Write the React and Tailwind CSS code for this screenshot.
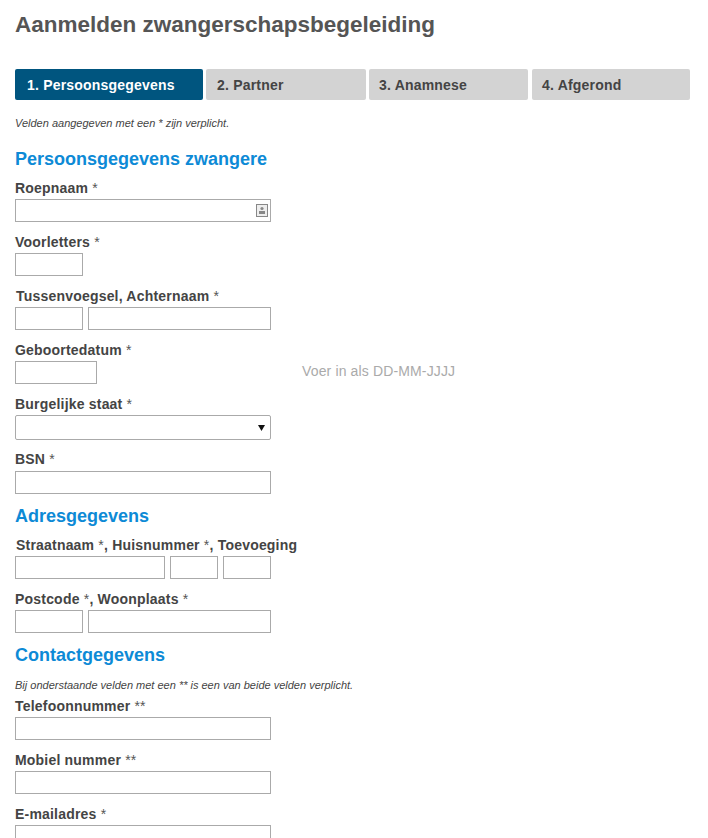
import { Fragment } from "react";

const tabs = [
  { label: "1. Persoonsgegevens", width: "w-[188px]", pad: "pl-[12px]", active: true },
  { label: "2. Partner", width: "w-[160px]", pad: "pl-[11px]" },
  { label: "3. Anamnese", width: "w-[159px]", pad: "pl-[10px]" },
  { label: "4. Afgerond", width: "ml-px w-[158px]", pad: "pl-[10px]" },
];

function Label({ children, className = "" }) {
  return (
    <label className={`block h-5 text-sm font-bold leading-[19px] tracking-[0.2px] text-[#444] ${className}`}>
      {children}
    </label>
  );
}

function Star({ mark = "*" }) {
  return <span className="font-normal text-[#555]">{mark}</span>;
}

function TextInput({ width = "w-[256px]" }) {
  return <input type="text" className={`block h-[23px] border border-[#aaa] bg-white ${width}`} />;
}

function Heading({ children, className = "" }) {
  return (
    <h2 className={`text-lg font-bold leading-6 text-[#0d8ad6] ${className}`}>{children}</h2>
  );
}

export default function App() {
  return (
    <div className="h-screen overflow-hidden bg-white px-[15px] font-['Liberation_Sans',Arial,sans-serif]">
      <h1 className="pt-[11px] text-[22.5px] font-bold leading-7 text-[#555]">
        Aanmelden zwangerschapsbegeleiding
      </h1>

      {/* STAPPEN */}
      <div className="mt-[30px] flex gap-[3px]">
        {tabs.map((tab) => (
          <div
            key={tab.label}
            className={`h-[31px] rounded-[2px] text-sm font-bold leading-[32px] tracking-[0.2px] ${tab.pad} ${tab.width} ${
              tab.active ? "bg-[#00557f] text-white" : "bg-[#d3d3d3] text-[#444]"
            }`}
          >
            {tab.label}
          </div>
        ))}
      </div>

      <p className="mt-[17px] h-3 text-[11px] italic leading-3 text-[#444]">
        Velden aangegeven met een * zijn verplicht.
      </p>

      <Heading className="mt-[18px]">Persoonsgegevens zwangere</Heading>

      {/* PERSOONSGEGEVENS */}
      <div className="mt-[8px]">
        <Label>
          Roepnaam <Star />
        </Label>
        <div className="relative w-[256px]">
          <TextInput />
          <svg
            className="absolute right-[3px] top-[5px]"
            width="12"
            height="13"
            viewBox="0 0 12 13"
          >
            <rect x="0.5" y="0.5" width="11" height="12" fill="#eee" stroke="#888" />
            <circle cx="6" cy="4.5" r="1.6" fill="#888" />
            <rect x="3" y="7" width="6" height="3" fill="#888" />
          </svg>
        </div>

        <Label className="mt-[11px]">
          Voorletters <Star />
        </Label>
        <TextInput width="w-[68px]" />

        <Label className="mt-[11px] pl-px">
          Tussenvoegsel, Achternaam <Star />
        </Label>
        <div className="flex gap-[5px]">
          <TextInput width="w-[68px]" />
          <TextInput width="w-[183px]" />
        </div>

        <Label className="mt-[11px]">
          Geboortedatum <Star />
        </Label>
        <div className="flex items-center">
          <TextInput width="w-[82px]" />
          <span className="ml-[205px] mb-[3px] text-sm tracking-[0.14px] text-[#aaa]">
            Voer in als DD-MM-JJJJ
          </span>
        </div>

        <Label className="mt-[11px]">
          Burgelijke staat <Star />
        </Label>
        <div className="relative h-[25px] w-[256px] rounded-[2px] border border-[#aaa] bg-white">
          <svg className="absolute right-[5px] top-[9px]" width="7" height="6" viewBox="0 0 7 6">
            <path d="M0 0h7L3.5 6z" fill="#111" />
          </svg>
        </div>

        <Label className="mt-[10px] mb-[1px]">
          BSN <Star />
        </Label>
        <TextInput />
      </div>

      <Heading className="mt-[10px]">Adresgegevens</Heading>

      {/* ADRES */}
      <div className="mt-[8px]">
        <Label className="pl-px tracking-[0.1px]">
          Straatnaam <Star />, Huisnummer <Star />, Toevoeging
        </Label>
        <div className="flex gap-[5px]">
          <TextInput width="w-[150px]" />
          <TextInput width="w-[48px]" />
          <TextInput width="w-[48px]" />
        </div>

        <Label className="mt-[11px]">
          Postcode <Star />, Woonplaats <Star />
        </Label>
        <div className="flex gap-[5px]">
          <TextInput width="w-[68px]" />
          <TextInput width="w-[183px]" />
        </div>
      </div>

      <Heading className="mt-[10px]">Contactgegevens</Heading>

      {/* CONTACT */}
      <p className="mt-[12px] h-3 text-[11px] italic leading-3 text-[#444]">
        Bij onderstaande velden met een ** is een van beide velden verplicht.
      </p>
      <div className="mt-[6px]">
        {[
          ["Telefoonnummer", "**"],
          ["Mobiel nummer", "**"],
          ["E-mailadres", "*"],
        ].map(([name, mark], i) => (
          <Fragment key={name}>
            <Label className={i > 0 ? "mt-[11px]" : ""}>
              {name} <Star mark={mark} />
            </Label>
            <TextInput />
          </Fragment>
        ))}
      </div>
    </div>
  );
}
